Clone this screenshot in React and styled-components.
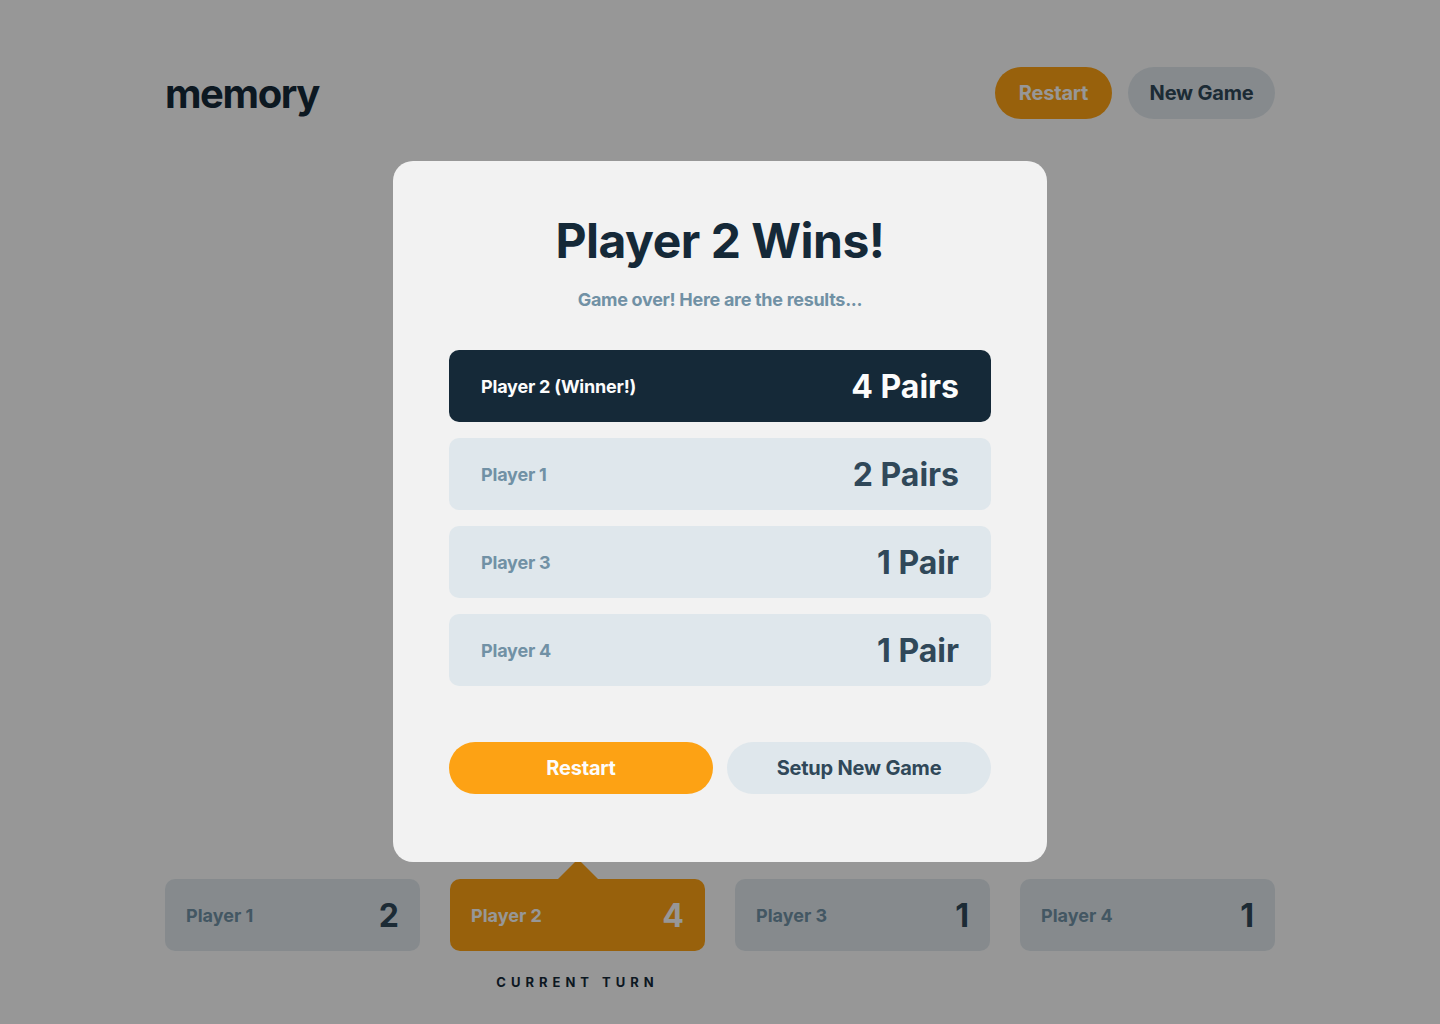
import React from 'react';
import styled, { createGlobalStyle } from 'styled-components';

const GlobalStyle = createGlobalStyle`
  * { box-sizing: border-box; }
  body {
    margin: 0;
    background: #FCFCFC;
    font-family: Inter, "Liberation Sans", sans-serif;
  }
`;

const Page = styled.div`
  width: 1110px;
  margin: 0 auto;
  padding-top: 67px;
  height: 1024px;
  display: flex;
  flex-direction: column;
`;

const Header = styled.header`
  display: flex;
  align-items: center;
  justify-content: space-between;
  height: 52px;
`;

const Logo = styled.h1`
  margin: 0;
  font-size: 40px;
  font-weight: 700;
  letter-spacing: -1.4px;
  color: #152938;
`;

const HeaderActions = styled.div`
  display: flex;
  gap: 16px;
`;

const PillButton = styled.button`
  border: 0;
  height: 52px;
  padding: 0 ${p => p.$pad || 20}px;
  border-radius: 26px;
  font-family: inherit;
  font-size: ${p => p.$size || 20}px;
  font-weight: 700;
  letter-spacing: -0.2px;
  white-space: nowrap;
  cursor: pointer;
  background: ${p => (p.$primary ? '#FDA214' : '#DFE7EC')};
  color: ${p => (p.$primary ? '#FCFCFC' : '#304859')};
  width: ${p => (p.$width ? `${p.$width}px` : 'auto')};
`;

const Board = styled.div`
  flex: 1;
`;

const Players = styled.footer`
  display: grid;
  grid-template-columns: repeat(4, 1fr);
  gap: 30px;
  margin-bottom: 34px;
`;

const PlayerSlot = styled.div`
  display: flex;
  flex-direction: column;
  align-items: center;
  gap: 23px;
`;

const PlayerCard = styled.div`
  position: relative;
  width: 100%;
  height: 72px;
  border-radius: 10px;
  padding: 0 21px 0 21px;
  display: flex;
  align-items: center;
  justify-content: space-between;
  background: ${p => (p.$active ? '#FDA214' : '#DFE7EC')};

  ${p => p.$active && `
    &::before {
      content: '';
      position: absolute;
      top: -20px;
      left: 50%;
      transform: translateX(-50%);
      border-left: 20px solid transparent;
      border-right: 20px solid transparent;
      border-bottom: 20px solid #FDA214;
    }
  `}
`;

const PlayerName = styled.span`
  font-size: 18px;
  font-weight: 700;
  color: ${p => (p.$active ? '#FCFCFC' : '#7191A5')};
`;

const PlayerScore = styled.span`
  font-size: 32px;
  font-weight: 700;
  color: ${p => (p.$active ? '#FCFCFC' : '#304859')};
`;

const TurnLabel = styled.span`
  font-size: 13px;
  font-weight: 700;
  letter-spacing: 5px;
  color: #152938;
`;

const Overlay = styled.div`
  position: fixed;
  inset: 0;
  background: rgba(0, 0, 0, 0.4);
  display: flex;
  align-items: center;
  justify-content: center;
`;

const Modal = styled.div`
  width: 654px;
  height: 701px;
  margin-top: -1px;
  background: #F2F2F2;
  border-radius: 20px;
  padding: 50px 56px 0;
  display: flex;
  flex-direction: column;
  align-items: center;
`;

const Title = styled.h2`
  margin: 0;
  font-size: 48px;
  line-height: 60px;
  font-weight: 700;
  letter-spacing: -0.5px;
  color: #152938;
`;

const Subtitle = styled.p`
  margin: 18px 0 39px;
  font-size: 18px;
  line-height: 22px;
  font-weight: 700;
  letter-spacing: -0.3px;
  color: #7191A5;
`;

const Results = styled.div`
  width: 100%;
  display: flex;
  flex-direction: column;
  gap: 16px;
`;

const ResultRow = styled.div`
  height: 72px;
  border-radius: 10px;
  padding: 0 32px;
  display: flex;
  align-items: center;
  justify-content: space-between;
  background: ${p => (p.$winner ? '#152938' : '#DFE7EC')};
`;

const ResultName = styled.span`
  font-size: 18px;
  font-weight: 700;
  letter-spacing: -0.2px;
  color: ${p => (p.$winner ? '#FCFCFC' : '#7191A5')};
`;

const ResultScore = styled.span`
  font-size: 32px;
  font-weight: 700;
  color: ${p => (p.$winner ? '#FCFCFC' : '#304859')};
`;

const ModalActions = styled.div`
  width: 100%;
  margin-top: 56px;
  display: grid;
  grid-template-columns: 1fr 1fr;
  gap: 14px;
`;

const players = [
  { name: 'Player 1', score: 2 },
  { name: 'Player 2', score: 4, active: true },
  { name: 'Player 3', score: 1 },
  { name: 'Player 4', score: 1 },
];

const results = [
  { name: 'Player 2 (Winner!)', pairs: '4 Pairs', winner: true },
  { name: 'Player 1', pairs: '2 Pairs' },
  { name: 'Player 3', pairs: '1 Pair' },
  { name: 'Player 4', pairs: '1 Pair' },
];

export default function App() {
  return (
    <>
      <GlobalStyle />
      <Page>
        <Header>
          <Logo>memory</Logo>
          <HeaderActions>
            <PillButton $primary $width={117}>Restart</PillButton>
            <PillButton $width={147}>New Game</PillButton>
          </HeaderActions>
        </Header>
        <Board />
        <Players>
          {players.map(p => (
            <PlayerSlot key={p.name}>
              <PlayerCard $active={p.active}>
                <PlayerName $active={p.active}>{p.name}</PlayerName>
                <PlayerScore $active={p.active}>{p.score}</PlayerScore>
              </PlayerCard>
              {p.active && <TurnLabel>CURRENT TURN</TurnLabel>}
            </PlayerSlot>
          ))}
        </Players>
      </Page>
      <Overlay>
        <Modal>
          <Title>Player 2 Wins!</Title>
          <Subtitle>Game over! Here are the results...</Subtitle>
          <Results>
            {results.map(r => (
              <ResultRow key={r.name} $winner={r.winner}>
                <ResultName $winner={r.winner}>{r.name}</ResultName>
                <ResultScore $winner={r.winner}>{r.pairs}</ResultScore>
              </ResultRow>
            ))}
          </Results>
          <ModalActions>
            <PillButton $primary>Restart</PillButton>
            <PillButton>Setup New Game</PillButton>
          </ModalActions>
        </Modal>
      </Overlay>
    </>
  );
}
